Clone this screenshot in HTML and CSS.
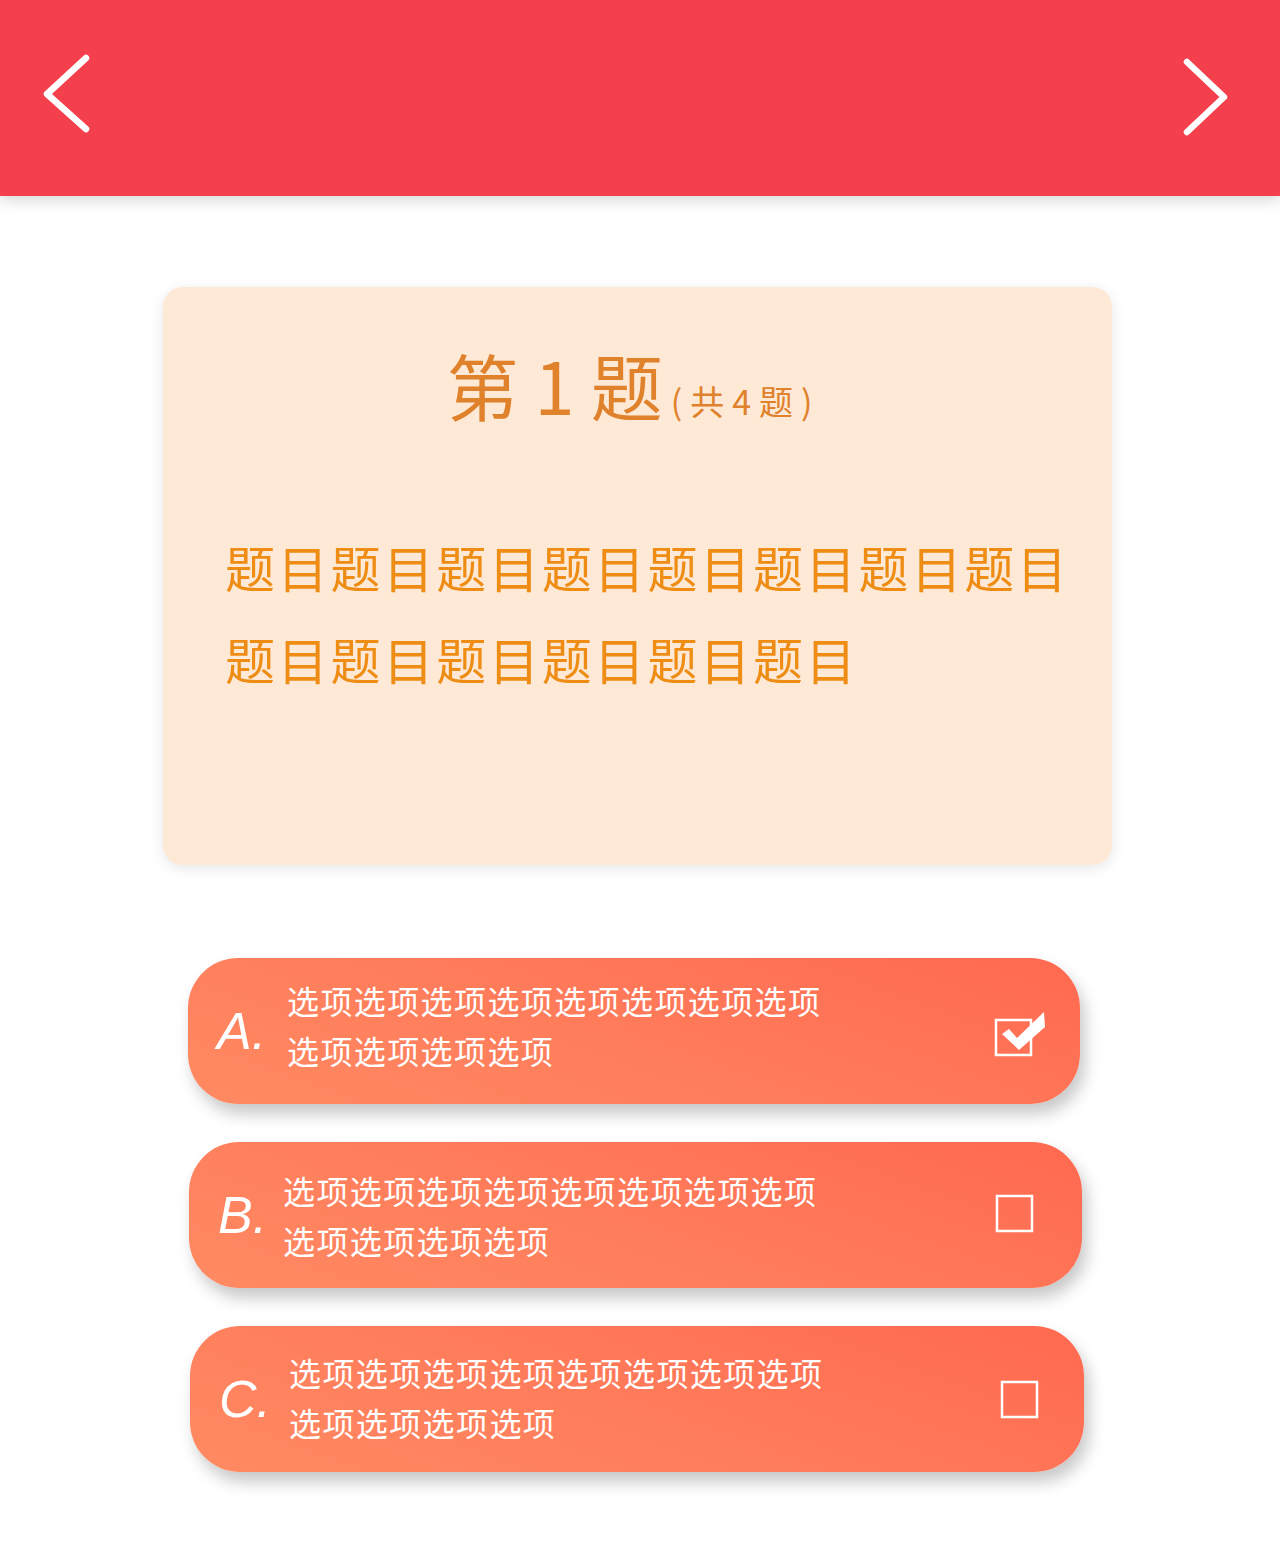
FILE: index.html
```html
<!DOCTYPE html>
<html lang="zh-CN">
<head>
<meta charset="utf-8">
<title>答题</title>
<link rel="stylesheet" href="styles.css">
</head>
<body>
<header class="topbar">
  <svg class="nav-arrow" width="60" height="90" viewBox="0 0 60 90"><polyline points="46,5 7,41 46,76" fill="none" stroke="#fff" stroke-width="6.5" stroke-linecap="round" stroke-linejoin="round"/></svg>
  <svg class="nav-arrow" width="60" height="90" viewBox="0 0 60 90"><polyline points="7,9 44,44 7,79" fill="none" stroke="#fff" stroke-width="6.5" stroke-linecap="round" stroke-linejoin="round"/></svg>
</header>
<main class="content">
  <section class="question-card">
    <h1 class="q-title">第 1 题<span class="q-count">(共4题)</span></h1>
    <p class="q-text">题目题目题目题目题目题目题目题目题目题目题目题目题目题目</p>
  </section>
  <ul class="options">
    <li class="option option-a">
      <span class="opt-letter">A.</span>
      <span class="opt-text">选项选项选项选项选项选项选项选项选项选项选项选项</span>
      <svg class="opt-check" width="56" height="50" viewBox="0 0 56 50"><rect x="3" y="12" width="35" height="35" fill="none" stroke="#fff" stroke-width="2.5"/><polygon points="9,26 16,21 24,30 51,4 52,19 26,42" fill="#fff"/></svg>
    </li>
    <li class="option option-b">
      <span class="opt-letter">B.</span>
      <span class="opt-text">选项选项选项选项选项选项选项选项选项选项选项选项</span>
      <svg class="opt-check" width="56" height="50" viewBox="0 0 56 50"><rect x="3" y="12" width="35" height="35" fill="none" stroke="#fff" stroke-width="2.5"/></svg>
    </li>
    <li class="option option-c">
      <span class="opt-letter">C.</span>
      <span class="opt-text">选项选项选项选项选项选项选项选项选项选项选项选项</span>
      <svg class="opt-check" width="56" height="50" viewBox="0 0 56 50"><rect x="3" y="12" width="35" height="35" fill="none" stroke="#fff" stroke-width="2.5"/></svg>
    </li>
  </ul>
</main>
</body>
</html>
```
FILE: styles.css
```css
* { box-sizing: border-box; }
html, body { margin: 0; padding: 0; background: #fff; }
body {
  font-family: "Noto Sans CJK SC", "Noto Sans", sans-serif;
  width: 1280px;
  min-height: 1564px;
}
.topbar {
  height: 196px;
  background: #f43f4c;
  display: flex;
  justify-content: space-between;
  align-items: center;
  padding: 0 40px;
  box-shadow: 0 4px 14px rgba(0, 0, 0, 0.16);
  position: relative;
  z-index: 1;
}
.nav-arrow { display: block; }
.content {
  padding-top: 91px;
  display: flex;
  flex-direction: column;
}
.question-card {
  margin-left: 163px;
  width: 949px;
  height: 578px;
  background: #fee9d7;
  border-radius: 20px;
  box-shadow: 0 3px 14px rgba(0, 0, 0, 0.1);
  padding: 57px 20px 0 62px;
}
.q-title {
  margin: 0 0 0 -50px;
  text-align: center;
  font-size: 72px;
  line-height: 80px;
  font-weight: 400;
  color: #e0812b;
}
.q-count {
  font-size: 34px;
  letter-spacing: 8px;
  margin-left: 8px;
}
.q-text {
  margin: 79px 0 0 0;
  font-size: 50px;
  line-height: 92px;
  letter-spacing: 2.8px;
  color: #ee8c14;
}
.options {
  list-style: none;
  margin: 93px 0 0 0;
  padding: 0;
  display: flex;
  flex-direction: column;
  gap: 38px;
}
.option {
  width: 892px;
  height: 146px;
  border-radius: 50px;
  background: linear-gradient(200deg, #ff6950 0%, #ff7b5a 50%, #ff8a62 100%);
  box-shadow: 5px 10px 16px rgba(0, 0, 0, 0.22);
  display: flex;
  align-items: center;
  padding-left: 29px;
  color: #fff;
}
.option-a { margin-left: 188px; }
.option-b { margin-left: 189px; width: 893px; }
.option-c { margin-left: 190px; width: 894px; }
.opt-letter {
  font-family: "Liberation Sans", Arial, sans-serif;
  font-style: italic;
  font-size: 52px;
  width: 70px;
  flex: none;
  line-height: 1;
}
.option-b .opt-letter { width: 65px; }
.opt-text {
  width: 550px;
  font-size: 32px;
  line-height: 50px;
  letter-spacing: 1.4px;
  margin-bottom: 12px;
}
.option-b .opt-text { margin-bottom: 0; }
.option-c .opt-text { margin-bottom: 4px; }
.opt-check {
  margin-left: auto;
  margin-right: 31px;
  margin-top: 4px;
  display: block;
  flex: none;
}
.option-b .opt-check { margin-right: 32px; margin-top: 0; margin-bottom: 12px; }
.option-c .opt-check { margin-right: 29px; margin-top: 0; margin-bottom: 8px; }
```
